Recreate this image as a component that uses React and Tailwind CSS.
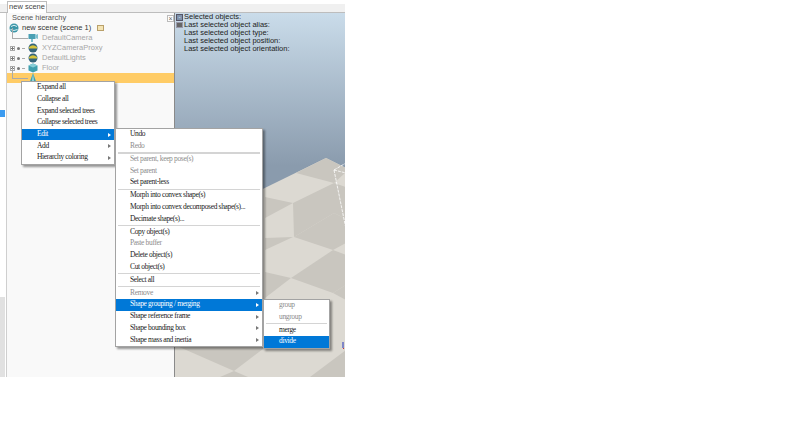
import React from "react";

const TREE = [
  { label: "new scene (scene 1)", icon: "globe", root: true },
  { label: "DefaultCamera", icon: "camera" },
  { label: "XYZCameraProxy", icon: "lights", expand: true },
  { label: "DefaultLights", icon: "lights", expand: true },
  { label: "Floor", icon: "cube", expand: true },
  { label: "", icon: "cone", selected: true },
];

const INFO = ["Selected objects:", "Last selected object alias:", "Last selected object type:", "Last selected object position:", "Last selected object orientation:"];

const MENU_MAIN = [
  { label: "Expand all" },
  { label: "Collapse all" },
  { label: "Expand selected trees" },
  { label: "Collapse selected trees" },
  { label: "Edit", arrow: true, active: true },
  { label: "Add", arrow: true },
  { label: "Hierarchy coloring", arrow: true },
];

const MENU_EDIT = [
  { label: "Undo" },
  { label: "Redo", muted: true },
  { sep: true },
  { label: "Set parent, keep pose(s)", muted: true },
  { label: "Set parent", muted: true },
  { label: "Set parent-less" },
  { sep: true },
  { label: "Morph into convex shape(s)" },
  { label: "Morph into convex decomposed shape(s)..." },
  { label: "Decimate shape(s)..." },
  { sep: true },
  { label: "Copy object(s)" },
  { label: "Paste buffer", muted: true },
  { label: "Delete object(s)" },
  { label: "Cut object(s)" },
  { sep: true },
  { label: "Select all" },
  { sep: true },
  { label: "Remove", muted: true, arrow: true },
  { label: "Shape grouping / merging", arrow: true, active: true },
  { label: "Shape reference frame", arrow: true },
  { label: "Shape bounding box", arrow: true },
  { label: "Shape mass and inertia", arrow: true },
];

const MENU_SHAPE = [
  { label: "group", muted: true },
  { label: "ungroup", muted: true },
  { sep: true },
  { label: "merge" },
  { label: "divide", active: true },
];

function Menu({ items, className, textClass }) {
  return (
    <div className={`absolute bg-white border border-[#a3a3a3] shadow-[2px_2px_2px_rgba(0,0,0,0.4)] font-['Liberation_Serif',serif] text-[7.5px] tracking-[-0.35px] leading-none ${className}`}>
      {items.map((item, i) =>
        item.sep ? (
          <div key={i} className="h-[1.3px] mx-[2px] bg-[#d4d4d4]" />
        ) : (
          <div key={i} className={`relative h-[11.7px] pb-[1.5px] flex items-center whitespace-nowrap ${textClass} ${item.active ? "bg-[#0078d7] text-white" : item.muted ? "text-[#8c8c8c]" : "text-[#1a1a1a]"}`}>
            {item.label}
            {item.arrow && <span className={`absolute right-[3px] top-[4px] w-0 h-0 border-y-[2px] border-y-transparent border-l-[3px] ${item.active ? "border-l-white" : "border-l-[#777]"}`} />}
          </div>
        )
      )}
    </div>
  );
}

function TreeIcon({ type }) {
  if (type === "globe")
    return (
      <svg width="10" height="10" viewBox="0 0 10 10">
        <circle cx="5" cy="5" r="4.5" fill="#3b96a8" />
        <path d="M2 3.500q3-2.500 6 0M1.500 6.500q3.500 2 7 0" stroke="#d8eef2" fill="none" />
      </svg>
    );
  if (type === "camera")
    return (
      <svg width="10" height="10" viewBox="0 0 10 10">
        <rect x="0.5" y="1" width="7" height="5" fill="#4aa0b4" />
        <path d="M7.500 2 10 1v5L7.500 5zM3 6h2v3H3z" fill="#7fc0cf" />
      </svg>
    );
  if (type === "lights")
    return (
      <svg width="10" height="10" viewBox="0 0 10 10">
        <circle cx="5" cy="5" r="4.5" fill="#34647a" />
        <path d="M1 4q4-3.500 8 0v1.500H1z" fill="#d6c23a" />
      </svg>
    );
  if (type === "cube")
    return (
      <svg width="10" height="10" viewBox="0 0 10 10">
        <path d="M5 0.500 9.500 2.500v5L5 9.500.5 7.500v-5z" fill="#3f9fae" />
        <path d="M.5 2.500 5 0.500l4.500 2L5 4.500z" fill="#86cdd6" />
      </svg>
    );
  return (
    <svg width="10" height="10" viewBox="0 0 10 10">
      <path d="M5 0 8 8.500q-3 2-6 0z" fill="#3f9fae" />
      <path d="M5 0 6 9H4z" fill="#a6dde3" />
    </svg>
  );
}

function TreeRow({ row }) {
  return (
    <div className={`relative h-[10px] flex items-center whitespace-nowrap ${row.selected ? "bg-[#ffcc66]" : ""}`}>
      {row.root ? (
        <div className="w-[2px]" />
      ) : row.expand ? (
        <div className="w-[21px] flex items-center gap-[2px] pl-[3px]">
          <svg width="5" height="5" viewBox="0 0 5 5" className="shrink-0">
            <rect x="0.5" y="0.5" width="4" height="4" fill="#fff" stroke="#aaa" />
            <path d="M1 2.500h3M2.500 1v3" stroke="#777" />
          </svg>
          <span className="w-[3px] h-[3px] rounded-full bg-[#777]" />
          <span className="w-[3px] h-px bg-[#aaa]" />
        </div>
      ) : (
        <div className="w-[21px] pl-[5px]">
          <div className="h-px bg-[#aaa]" />
          <div className="absolute left-[5px] top-[-5px] h-[10px] w-px bg-[#aaa]" />
        </div>
      )}
      <div className={`w-[10px] h-[10px] ${row.root ? "mr-[3px]" : "mr-[4px]"}`}><TreeIcon type={row.icon} /></div>
      <span className={row.root ? "text-[#333]" : "text-[#a8a8a8]"}>{row.label}</span>
      {row.root && <span className="ml-[6px] w-[7px] h-[6px] border border-[#b9a06a] bg-[#f4e4b4]" />}
    </div>
  );
}

function Floor() {
  return (
    <svg className="absolute inset-0" width="171" height="364" viewBox="174 13 171 364">
      <polygon points="325,158 345,168 345,377 174,377 174,232" fill="#dcd9d2" />
      <g fill="#c9c6bf">
        <polygon points="325,158 345,168 345,172 333,183 295,173" />
        <polygon points="264,197 292,203 264,218" />
        <polygon points="292,203 333,183 345,187 345,219 333,213 293,237" />
        <polygon points="264,238 292,237 264,250" />
        <polygon points="293,237 333,213 345,219 345,243 332,250" />
        <polygon points="264,272 290,278 264,298" />
        <polygon points="290,278 332,250 345,255 345,285 332,293" />
        <polygon points="332,293 345,285 345,300" />
        <polygon points="176,346 233,371 266,346" />
        <polygon points="233,371 219,377 247,377" />
        <polygon points="345,350 345,377 309,377" />
      </g>
      <path d="M333 170 345 163M333 170 345 173M333 170 345 229" stroke="#fff" strokeWidth="0.8" strokeDasharray="3 1" fill="none" />
      <path d="M342 342v6" stroke="#2233bb" strokeWidth="1" />
      <rect x="342" y="348" width="1" height="1" fill="#c33" />
    </svg>
  );
}

export default function App() {
  return (
    <div className="w-[800px] h-[433px] bg-white overflow-hidden font-['Liberation_Sans',sans-serif]">
      <div className="relative w-[345px] h-[377px] flex flex-col">
        <div className="h-[13px] pt-[4px] shrink-0">
          <div className="relative h-[9px] bg-[#f0f0f0] border-b border-[#bdbdbd]">
            <div className="absolute left-[7px] top-[-3px] w-[40px] h-[12px] bg-white border border-b-0 border-[#bdbdbd] text-[7.5px] leading-[10px] text-[#444] text-center whitespace-nowrap">new scene</div>
          </div>
        </div>
        <div className="flex flex-1 min-h-0">
          <div className="w-[7px] flex flex-col border-r border-[#cfcfcf] bg-white">
            <div className="h-[97px]" />
            <div className="h-[7px] w-[5px] bg-[#3b9bf0]" />
            <div className="h-[180px]" />
            <div className="flex-1 w-[5px] bg-[#e1e1e1]" />
          </div>
          <div className="relative w-[167px] bg-[#f9f9f9] text-[7.5px] leading-none">
            <div className="h-[10px] flex items-center justify-between pl-[5px]">
              <span className="text-[#555]">Scene hierarchy</span>
              <span className="w-[7px] h-[7px] border border-[#bbb] bg-white text-[7px] leading-[5px] text-center text-[#666]">×</span>
            </div>
            {TREE.map((row) => <TreeRow key={row.icon + row.label} row={row} />)}
          </div>
          <div className="relative flex-1 bg-linear-to-b from-[#cadcea] to-[#8a9bad] to-[42%] border-l border-[#8a8a8a] overflow-hidden">
            <Floor />
            <div className="relative flex pl-[1px]">
              <div className="flex flex-col gap-[1px] w-[8px] pt-[1px]">
                <div className="w-[7px] h-[7px] bg-[#7f93ad] border border-[#556] text-[6px] leading-[4px] text-center text-white">-</div>
                <div className="w-[7px] h-[6px] bg-[#666] border border-[#99a]" />
              </div>
              <div className="text-[7.5px] leading-[8px] text-[#222] whitespace-nowrap">
                {INFO.map((t) => <div key={t}>{t}</div>)}
              </div>
            </div>
          </div>
        </div>
        <Menu items={MENU_MAIN} className="left-[21px] top-[81px] w-[94px]" textClass="pl-[15px]" />
        <Menu items={MENU_EDIT} className="left-[115px] top-[128px] w-[148px]" textClass="pl-[14px]" />
        <Menu items={MENU_SHAPE} className="left-[263px] top-[298.5px] w-[67px]" textClass="pl-[15px]" />
      </div>
    </div>
  );
}
